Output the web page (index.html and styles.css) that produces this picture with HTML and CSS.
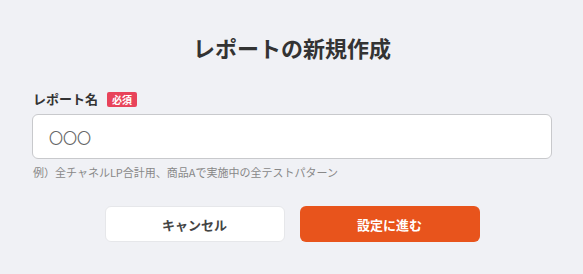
FILE: index.html
```html
<!DOCTYPE html>
<html lang="ja">
<head>
    <meta charset="UTF-8">
    <meta name="viewport" content="width=device-width, initial-scale=1.0">
    <title>レポートの新規作成</title>
    <link rel="stylesheet" href="styles.css">
</head>
<body>
    <div class="modal">
        <h1 class="modal-title">レポートの新規作成</h1>

        <div class="field">
            <label class="field-label" for="report-name">レポート名 <span class="required">必須</span></label>
            <input class="text-input" id="report-name" type="text" value="〇〇〇">
            <p class="field-help">例）全チャネルLP合計用、商品Aで実施中の全テストパターン</p>
        </div>

        <div class="actions">
            <button class="btn btn-cancel">キャンセル</button>
            <button class="btn btn-primary">設定に進む</button>
        </div>
    </div>
</body>
</html>
```

FILE: styles.css
```css
* {
    margin: 0;
    padding: 0;
    box-sizing: border-box;
    font-family: "Noto Sans CJK JP", "Noto Sans", sans-serif;
}

body {
    background: #f0f1f5;
    color: #333;
}

.modal {
    width: 583px;
    height: 274px;
    padding: 30px 31px 0 32px;
}

.modal-title {
    text-align: center;
    font-size: 22px;
    font-weight: 700;
    line-height: 34px;
    color: #333;
}

.field {
    margin-top: 25px;
}

.field-label {
    display: flex;
    align-items: center;
    gap: 9px;
    font-size: 13px;
    font-weight: 700;
    line-height: 20px;
    padding-left: 1px;
}

.required {
    background: #e8435a;
    color: #fff;
    font-size: 10px;
    font-weight: 700;
    line-height: 15px;
    padding: 0 5px;
    border-radius: 2px;
}

.text-input {
    display: block;
    width: 100%;
    height: 45px;
    margin-top: 5px;
    padding: 0 16px;
    background: #fff;
    border: 1px solid #c8c9cc;
    border-radius: 6px;
    font-size: 14px;
    color: #666;
    outline: none;
}

.field-help {
    margin-top: 5px;
    padding-left: 1px;
    font-size: 11px;
    line-height: 17px;
    color: #888;
}

.actions {
    display: flex;
    justify-content: center;
    gap: 15px;
    margin-top: 25px;
}

.btn {
    width: 180px;
    height: 36px;
    border-radius: 6px;
    font-size: 13px;
    font-weight: 700;
    cursor: pointer;
}

.btn-cancel {
    background: #fff;
    color: #444;
    border: 1px solid #e6e7ea;
}

.btn-primary {
    background: #e8541c;
    color: #fff;
    border: none;
}
```
